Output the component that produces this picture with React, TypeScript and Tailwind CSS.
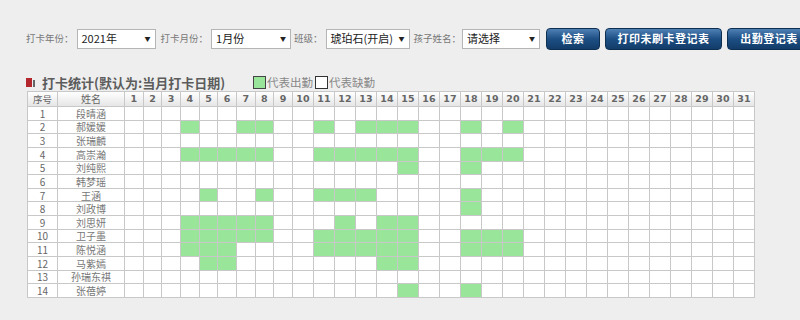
import React from 'react';

const cjk = { fontFamily: '"Noto Sans CJK SC", "Noto Sans", sans-serif' };

const days = Array.from({ length: 31 }, (_, i) => i + 1);

const rows: { name: string; on: number[] }[] = [
  { name: '段晴涵', on: [] },
  { name: '郝媛媛', on: [4, 7, 8, 11, 13, 14, 15, 18, 20] },
  { name: '张瑞麟', on: [] },
  { name: '高崇瀚', on: [4, 5, 6, 7, 8, 11, 12, 13, 14, 15, 18, 19, 20] },
  { name: '刘纯熙', on: [15, 18] },
  { name: '韩梦瑶', on: [] },
  { name: '王涵', on: [5, 8, 11, 12, 13, 18] },
  { name: '刘政博', on: [18] },
  { name: '刘思妍', on: [4, 5, 6, 7, 8, 12, 14, 15] },
  { name: '卫子墨', on: [4, 5, 6, 7, 8, 11, 12, 13, 14, 15, 18, 19, 20] },
  { name: '陈悦涵', on: [4, 5, 6, 11, 12, 13, 14, 15, 18, 19, 20] },
  { name: '马紫嫣', on: [5, 6, 14, 15] },
  { name: '孙瑞东祺', on: [] },
  { name: '张蓓婷', on: [15, 18] },
];

const Label = ({ text, className = '' }: { text: string; className?: string }) => (
  <span className={`text-[9.5px] leading-none text-[#777] whitespace-nowrap ${className}`}>{text}</span>
);

const FakeSelect = ({ value, className = '' }: { value: string; className?: string }) => (
  <div
    className={`h-[20px] bg-white border border-[#b5b5b5] flex items-center justify-between pl-[4px] pr-[4px] ${className}`}
  >
    <span className="text-[11px] leading-none text-[#222] whitespace-nowrap">{value}</span>
    <span className="text-[6px] leading-none text-[#222]">▼</span>
  </div>
);

const Btn = ({ text, className = '' }: { text: string; className?: string }) => (
  <button
    type="button"
    className={`h-[22px] rounded-[4px] border border-[#0c2f52] bg-gradient-to-b from-[#4f80b4] via-[#1d4f84] to-[#123c69] text-white text-[11px] font-bold leading-none tracking-[0.5px] shrink-0 ${className}`}
  >
    {text}
  </button>
);

export default function App() {
  return (
    <div className="w-[800px] h-[320px] bg-[#eeeeee] overflow-hidden" style={cjk}>
      {/* filter bar */}
      <div className="flex items-center h-[23px] mt-[27px] pl-[26px]">
        <Label text="打卡年份：" />
        <FakeSelect value="2021年" className="ml-[3px] w-[79px] shrink-0" />
        <Label text="打卡月份：" className="ml-[5px]" />
        <FakeSelect value="1月份" className="ml-[3px] w-[80px] shrink-0" />
        <Label text="班级：" className="ml-[3px]" />
        <FakeSelect value="琥珀石(开启)" className="ml-[3px] w-[84px] shrink-0" />
        <Label text="孩子姓名：" className="ml-[4px]" />
        <FakeSelect value="请选择" className="ml-[1px] w-[78px] shrink-0" />
        <Btn text="检索" className="ml-[6px] w-[54px]" />
        <Btn text="打印未刷卡登记表" className="ml-[5px] w-[117px]" />
        <Btn text="出勤登记表" className="ml-[5px] w-[84px]" />
      </div>

      {/* title + legend */}
      <div className="flex items-center h-[15px] mt-[25px] mb-[1px] pl-[26px]">
        <div className="flex items-end h-[9px] w-[16px] shrink-0">
          <span className="block w-[6px] h-[9px] bg-[#b3262b]" />
          <span className="block w-[2px] h-[7px] ml-[1px] bg-[#666]" />
        </div>
        <span className="w-[211px] shrink-0 text-[13px] leading-[14px] font-bold text-[#5c5c5c] whitespace-nowrap">
          打卡统计(默认为:当月打卡日期)
        </span>
        <span className="block w-[13px] h-[13px] bg-[#99e599] border border-[#444] shrink-0" />
        <span className="text-[11.5px] leading-none text-[#888] ml-[1px] mr-[2px] whitespace-nowrap">代表出勤</span>
        <span className="block w-[13px] h-[13px] bg-white border border-[#333] shrink-0" />
        <span className="text-[11.5px] leading-none text-[#888] ml-[1px] whitespace-nowrap">代表缺勤</span>
      </div>

      {/* table */}
      <table className="ml-[27px] w-[727px] table-fixed border-collapse border border-[#bdbdbd] bg-white">
        <colgroup>
          <col className="w-[30px]" />
          <col className="w-[67px]" />
          {days.map((d) => (
            <col key={d} className={d < 10 ? 'w-[18.67px]' : 'w-[21px]'} />
          ))}
        </colgroup>
        <thead>
          <tr className="h-[15px] bg-gradient-to-b from-white to-[#e4e4e4]">
            <th className="border border-[#c8c8c8] p-0 text-[9.5px] leading-[12px] font-normal text-[#666]">序号</th>
            <th className="border border-[#c8c8c8] p-0 text-[10px] leading-[12px] font-normal text-[#666]">姓名</th>
            {days.map((d) => (
              <th
                key={d}
                className="border border-[#c8c8c8] p-0 text-[9.5px] leading-[12px] font-bold text-[#666]"
                style={{ fontFamily: '"DejaVu Sans", sans-serif' }}
              >
                {d}
              </th>
            ))}
          </tr>
        </thead>
        <tbody>
          {rows.map((r, i) => (
            <tr key={i} className="h-[13.64px]">
              <td className="border border-[#c8c8c8] p-0 text-center text-[10px] leading-[11px] text-[#666]">{i + 1}</td>
              <td className="border border-[#c8c8c8] p-0 text-center text-[10px] leading-[11px] text-[#777] whitespace-nowrap">
                {r.name}
              </td>
              {days.map((d) => (
                <td
                  key={d}
                  className={`border border-[#c8c8c8] p-0 ${r.on.includes(d) ? 'bg-[#99e599]' : 'bg-white'}`}
                />
              ))}
            </tr>
          ))}
        </tbody>
      </table>
    </div>
  );
}
